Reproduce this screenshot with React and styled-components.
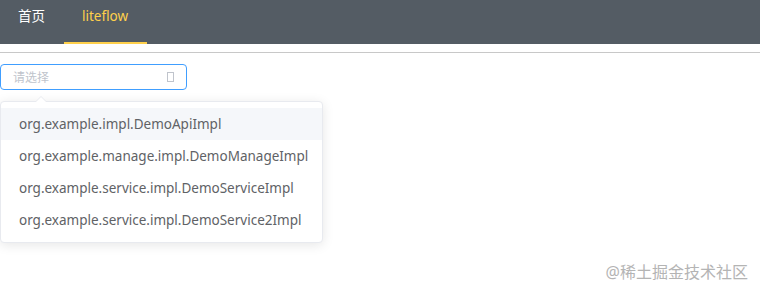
import React from "react";
import styled, { createGlobalStyle } from "styled-components";

const Global = createGlobalStyle`
  html, body { margin: 0; padding: 0; background: #fff; }
  body { font-family: "Noto Sans", "Noto Sans CJK SC", sans-serif; }
`;

const Page = styled.div`
  width: 760px;
  height: 297px;
  position: relative;
  overflow: hidden;
  background: #fff;
`;

const Menu = styled.nav`
  display: flex;
  height: 44px;
  background: #545c64;
`;

const MenuItem = styled.div`
  box-sizing: border-box;
  height: 44px;
  padding: 8px 19px 0 18px;
  font-size: 13.5px;
  line-height: 16px;
  color: ${(p) => (p.$active ? "#ffd04b" : "#fff")};
  border-bottom: 2px solid ${(p) => (p.$active ? "#ffd04b" : "transparent")};
`;

const Divider = styled.div`
  margin-top: 8px;
  height: 1px;
  background: #c8c8c8;
`;

const Content = styled.div`
  padding-top: 11px;
`;

const SelectWrap = styled.div`
  position: relative;
  width: 187px;
`;

const Input = styled.div`
  box-sizing: border-box;
  height: 26px;
  border: 1px solid #409eff;
  border-radius: 4px;
  display: flex;
  align-items: center;
  justify-content: space-between;
  padding: 0 12px 0 12px;
  font-size: 12px;
  color: #c0c4cc;
`;

const Tofu = styled.span`
  display: block;
  width: 5px;
  height: 8px;
  border: 1px solid #c0c4cc;
`;

const Dropdown = styled.div`
  position: absolute;
  left: 0;
  top: 37px;
  width: 323px;
  box-sizing: border-box;
  padding: 6px 0;
  background: #fff;
  border: 1px solid #e8eaef;
  border-radius: 4px;
  box-shadow: 0 2px 12px rgba(0, 0, 0, 0.1);
  z-index: 10;
`;

const Arrow = styled.div`
  position: absolute;
  top: -6px;
  left: 34px;
  width: 0;
  height: 0;
  border-left: 6px solid transparent;
  border-right: 6px solid transparent;
  border-bottom: 6px solid #e8eaef;
  &::after {
    content: "";
    position: absolute;
    left: -5px;
    top: 1px;
    border-left: 5px solid transparent;
    border-right: 5px solid transparent;
    border-bottom: 5px solid #fff;
  }
`;

const Option = styled.div`
  height: 32px;
  line-height: 32px;
  padding: 0 18px;
  font-size: 13.5px;
  color: #606266;
  background: ${(p) => (p.$hover ? "#f5f7fa" : "transparent")};
  white-space: nowrap;
`;

const Watermark = styled.div`
  position: absolute;
  right: 12px;
  bottom: 14px;
  font-size: 16px;
  color: #b4b4b4;
  font-family: "Noto Sans", "Noto Sans CJK SC", sans-serif;
`;

const options = [
  "org.example.impl.DemoApiImpl",
  "org.example.manage.impl.DemoManageImpl",
  "org.example.service.impl.DemoServiceImpl",
  "org.example.service.impl.DemoService2Impl",
];

export default function App() {
  return (
    <Page>
      <Global />
      <Menu>
        <MenuItem>首页</MenuItem>
        <MenuItem $active>liteflow</MenuItem>
      </Menu>
      <Divider />
      <Content>
        <SelectWrap>
          <Input>
            <span>请选择</span>
            <Tofu />
          </Input>
          <Dropdown>
            <Arrow />
            {options.map((o, i) => (
              <Option key={o} $hover={i === 0}>
                {o}
              </Option>
            ))}
          </Dropdown>
        </SelectWrap>
      </Content>
      <Watermark>@稀土掘金技术社区</Watermark>
    </Page>
  );
}
